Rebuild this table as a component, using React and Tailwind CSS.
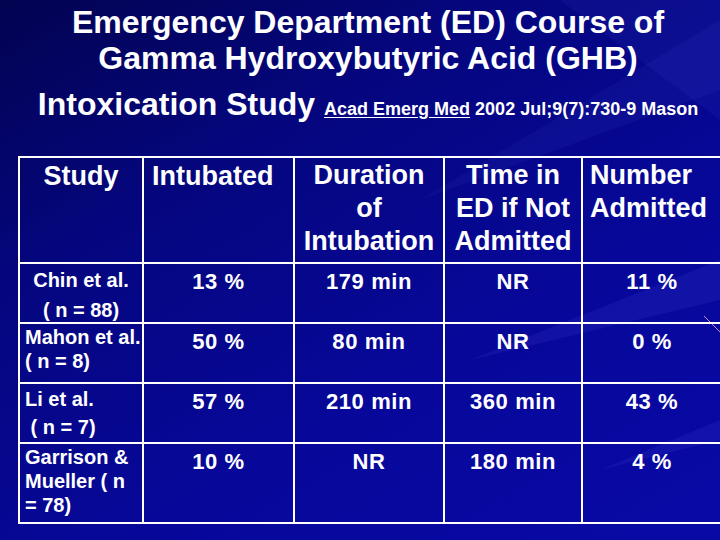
import React from 'react';

const cols = 'grid-cols-[124px_151px_150px_138px_140px]';

const rows = [
  { h: 'h-[60px]', study: ['Chin et al.', '( n = 88)'], lead: 'leading-[30px]', center: true, vals: ['13 %', '179 min', 'NR', '11 %'] },
  { h: 'h-[60px]', study: ['Mahon et al.', '( n = 8)'], lead: 'leading-[24px]', vals: ['50 %', '80 min', 'NR', '0 %'] },
  { h: 'h-[60px]', study: ['Li et al.', '\u00a0( n = 7)'], lead: 'leading-[28px]', vals: ['57 %', '210 min', '360 min', '43 %'] },
  { h: 'h-[80px]', study: ['Garrison &', 'Mueller ( n', '= 78)'], lead: 'leading-[24px]', vals: ['10 %', 'NR', '180 min', '4 %'] },
];

function Backdrop() {
  return (
    <svg className="absolute inset-0 pointer-events-none" width="720" height="540" viewBox="0 0 720 540">
      <polygon points="720,0 560,0 720,120" fill="#3a40d0" opacity="0.12" />
      <polygon points="720,20 420,200 720,90" fill="#5a60e0" opacity="0.08" />
      <polygon points="720,260 470,360 720,300" fill="#6a70ff" opacity="0.10" />
      <polygon points="720,420 600,470 720,440" fill="#6a70ff" opacity="0.10" />
      <line x1="704" y1="316" x2="720" y2="332" stroke="#c890e0" strokeWidth="1" />
    </svg>
  );
}

export default function App() {
  return (
    <div className="relative w-[720px] h-[540px] overflow-hidden bg-[linear-gradient(150deg,#020350_0%,#05067e_30%,#07089a_65%,#0909a6_100%)] text-white font-['Liberation_Sans',Arial,sans-serif]">
      <Backdrop />
      <div className="relative">
        {/* Title */}
        <div className="pt-[4px] pl-4 text-center font-bold text-[32px] leading-[36px]">
          <div>Emergency Department (ED) Course of</div>
          <div>Gamma Hydroxybutyric Acid (GHB)</div>
          <div className="mt-[10px] h-[36px] whitespace-nowrap">
            Intoxication Study{' '}
            <span className="text-[18px] leading-[18px]">
              <span className="underline underline-offset-[2px]">Acad Emerg Med</span> 2002 Jul;9(7):730-9 Mason
            </span>
          </div>
        </div>

        {/* Table */}
        <div className={`mt-[34px] ml-[18px] w-[705px] grid ${cols} border-l-2 border-t-2 border-white`}>
          <div className="h-[106px] border-r-2 border-b-2 border-white pt-[2px] text-center font-bold text-[27px] leading-[33px]">Study</div>
          <div className="h-[106px] border-r-2 border-b-2 border-white pt-[2px] pl-2 font-bold text-[27px] leading-[33px]">Intubated</div>
          <div className="h-[106px] border-r-2 border-b-2 border-white pt-[1px] text-center font-bold text-[27px] leading-[33px]">
            Duration<br />of<br />Intubation
          </div>
          <div className="h-[106px] border-r-2 border-b-2 border-white pt-[1px] text-center font-bold text-[27px] leading-[33px]">
            Time in<br />ED if Not<br />Admitted
          </div>
          <div className="h-[106px] border-r-2 border-b-2 border-white pt-[1px] pl-[7px] font-bold text-[27px] leading-[33px]">
            Number<br />Admitted
          </div>

          {rows.map((r, i) => (
            <React.Fragment key={i}>
              <div className={`${r.h} border-r-2 border-b-2 border-white pt-[1px] px-[5px] font-bold text-[20px] ${r.lead} whitespace-nowrap ${r.center ? 'text-center' : ''}`}>
                {r.study.map((s, j) => <div key={j}>{s}</div>)}
              </div>
              {r.vals.map((v, j) => (
                <div key={j} className={`${r.h} border-r-2 border-b-2 border-white pt-[6px] text-center font-bold text-[22px] tracking-[0.6px] leading-[24px] whitespace-pre`}>
                  {v}
                </div>
              ))}
            </React.Fragment>
          ))}
        </div>
      </div>
    </div>
  );
}
